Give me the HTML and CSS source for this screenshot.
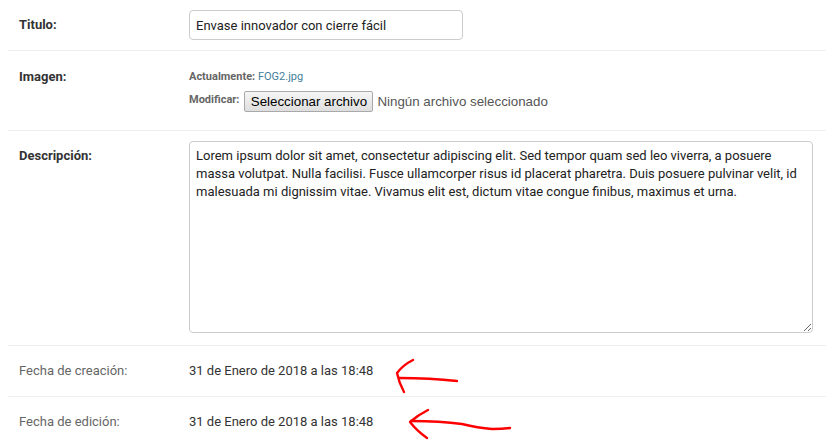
FILE: index.html
```html
<!DOCTYPE html>
<html lang="es">
<head>
<meta charset="utf-8">
<title>Editar</title>
<link rel="stylesheet" href="styles.css">
</head>
<body>
<div class="page">
  <div class="form">
    <div class="row">
      <div class="label req">Titulo:</div>
      <input class="text-input" type="text" value="Envase innovador con cierre fácil">
    </div>
    <div class="row row-file">
      <div class="label req label-file">Imagen:</div>
      <div class="file-block">
        <p class="file-line">Actualmente: <a class="file-link" href="#">FOG2.jpg</a></p>
        <div class="file-line2">
          <span class="file-mod">Modificar:</span>
          <span class="file-btn">Seleccionar archivo</span>
          <span class="file-none">Ningún archivo seleccionado</span>
        </div>
      </div>
    </div>
    <div class="row row-desc">
      <div class="label req">Descripción:</div>
      <textarea class="area">Lorem ipsum dolor sit amet, consectetur adipiscing elit. Sed tempor quam sed leo viverra, a posuere massa volutpat. Nulla facilisi. Fusce ullamcorper risus id placerat pharetra. Duis posuere pulvinar velit, id malesuada mi dignissim vitae. Vivamus elit est, dictum vitae congue finibus, maximus et urna.</textarea>
    </div>
    <div class="row">
      <div class="label">Fecha de creación:</div>
      <div class="value">31 de Enero de 2018 a las 18:48</div>
    </div>
    <div class="row">
      <div class="label">Fecha de edición:</div>
      <div class="value">31 de Enero de 2018 a las 18:48</div>
    </div>
  </div>
  <svg class="marks" width="826" height="443" viewBox="0 0 826 443" aria-hidden="true">
    <path d="M413 360 Q403 365 397 373 Q399 383 404 392" />
    <path d="M399 378 Q430 378 457 381" />
    <path d="M428 410 Q418 415 410 422 Q417 431 427 438" />
    <path d="M411 421 Q440 421 462 424 Q478 428 492 429 Q502 429 510 428" />
  </svg>
</div>
</body>
</html>
```
FILE: styles.css
```css
html, body {
  margin: 0;
  padding: 0;
  background: #fff;
}
body {
  font-family: Roboto, "Liberation Sans", Arial, sans-serif;
  font-size: 13px;
  color: #333;
  overflow: hidden;
}
.page {
  position: relative;
  width: 826px;
  height: 443px;
}
.form {
  margin-left: 8px;
}
.row {
  display: flex;
  align-items: flex-start;
  padding: 10px 0 10px 11px;
  border-bottom: 1px solid #eee;
}
.label {
  width: 170px;
  flex: none;
  line-height: 30px;
  font-size: 13px;
  color: #666;
}
.label.req {
  font-weight: bold;
  color: #333;
}
.label-file {
  padding-top: 1px;
}
.text-input {
  box-sizing: border-box;
  width: 274px;
  height: 30px;
  margin: 0;
  padding: 5px 6px;
  border: 1px solid #ccc;
  border-radius: 4px;
  font-family: Roboto, "Liberation Sans", Arial, sans-serif;
  font-size: 13px;
  color: #222;
  outline: none;
}
.row-file {
  padding-bottom: 18px;
}
.file-block {
  padding-top: 6px;
}
.file-line {
  margin: 0;
  line-height: 20px;
  font-size: 11px;
  font-weight: bold;
  color: #666;
}
.file-link {
  font-weight: normal;
  color: #447e9b;
  text-decoration: none;
}
.file-line2 {
  display: flex;
  align-items: center;
  margin-top: 4px;
  height: 21px;
}
.file-mod {
  font-size: 11px;
  font-weight: bold;
  color: #666;
  margin-right: 5px;
  position: relative;
  top: -2px;
}
.file-btn {
  box-sizing: border-box;
  height: 21px;
  width: 129px;
  display: flex;
  align-items: center;
  justify-content: center;
  border: 1px solid #a9a9a9;
  border-radius: 2px;
  background: linear-gradient(#f6f6f6, #dedede);
  font-family: "Liberation Sans", Arial, sans-serif;
  font-size: 13.333px;
  color: #000;
}
.file-none {
  margin-left: 4px;
  font-family: "Liberation Sans", Arial, sans-serif;
  font-size: 13.333px;
  color: #555;
}
.row-desc {
  padding-bottom: 12px;
}
.area {
  box-sizing: border-box;
  width: 624px;
  height: 192px;
  margin: 0;
  padding: 5px 6px;
  border: 1px solid #ccc;
  border-radius: 4px;
  font-family: Roboto, "Liberation Sans", Arial, sans-serif;
  font-size: 13px;
  line-height: 18px;
  color: #222;
  outline: none;
  resize: both;
}
.value {
  line-height: 30px;
  color: #333;
}
.marks {
  position: absolute;
  left: 0;
  top: 0;
  pointer-events: none;
}
.marks path {
  fill: none;
  stroke: #ff0000;
  stroke-width: 2.4;
  stroke-linecap: round;
  stroke-linejoin: round;
}
```
